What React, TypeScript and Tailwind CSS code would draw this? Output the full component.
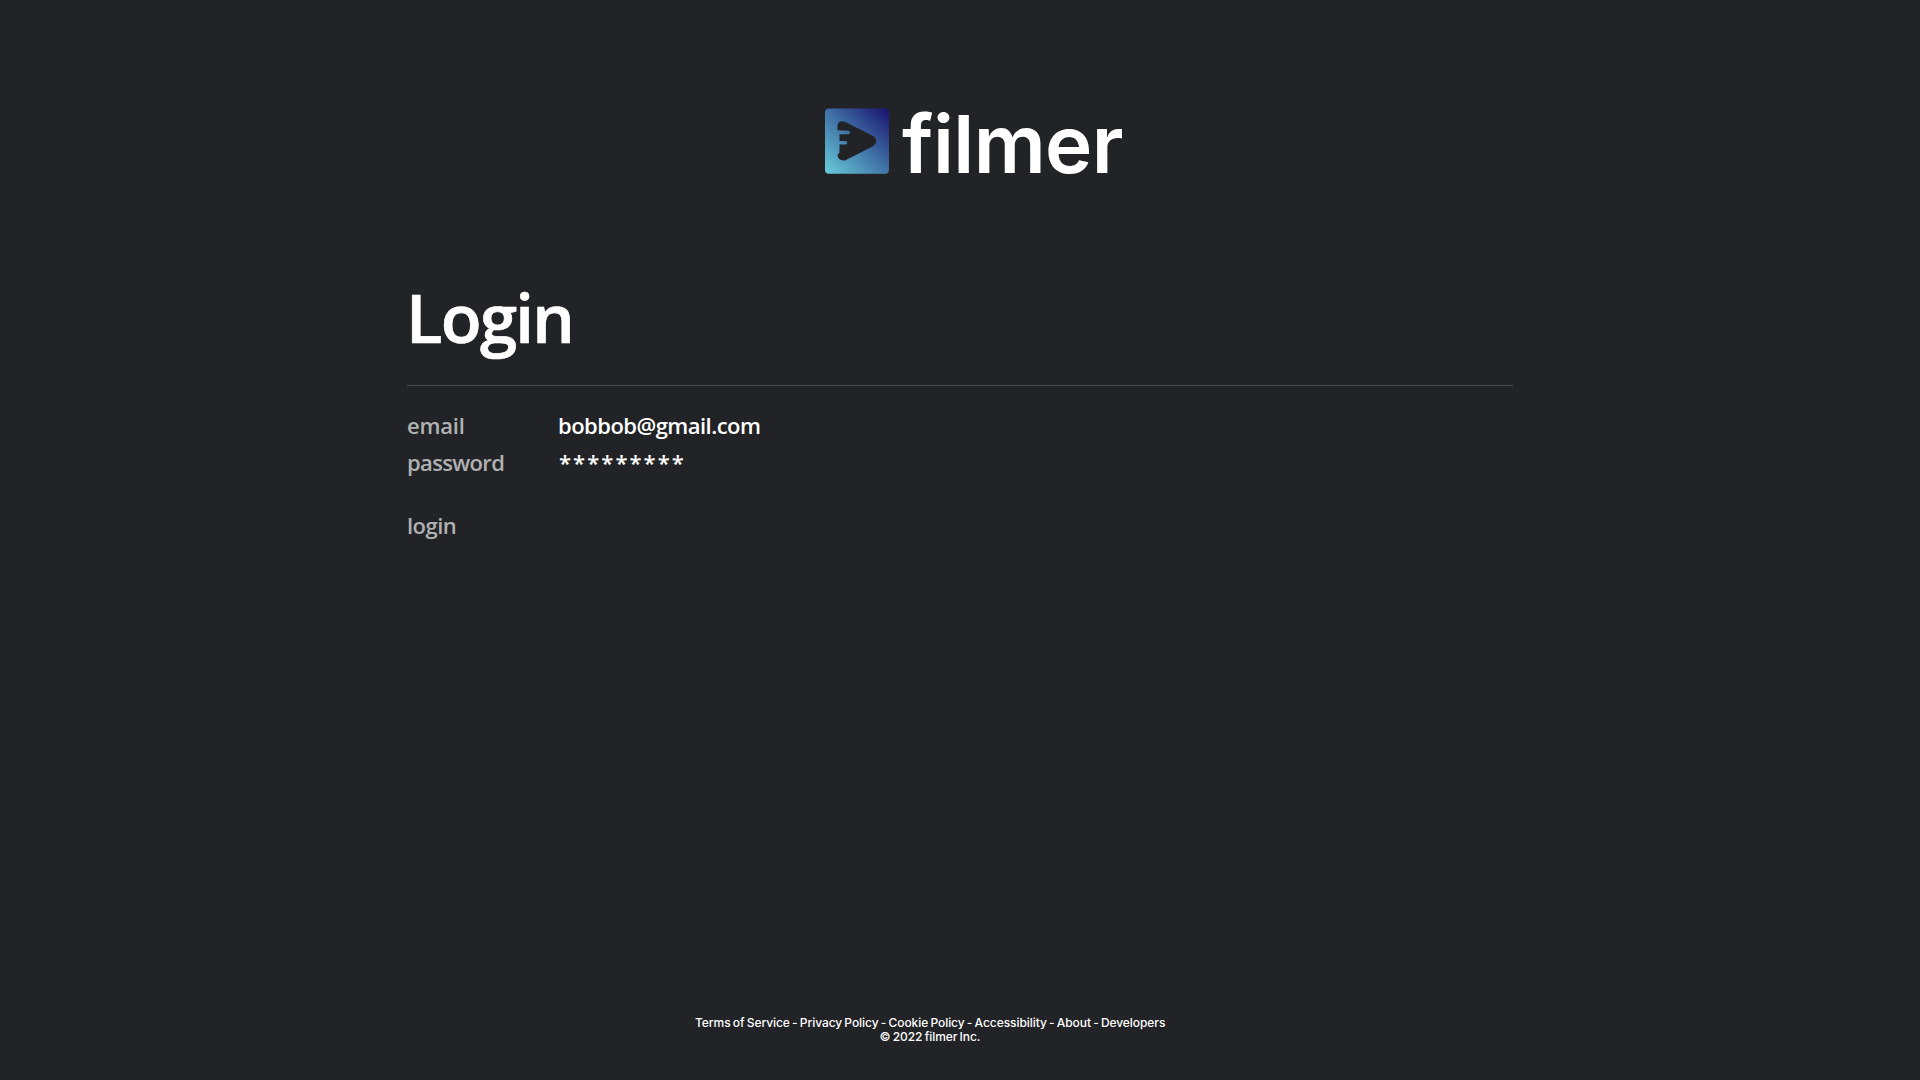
const links = ['Terms of Service', 'Privacy Policy', 'Cookie Policy', 'Accessibility', 'About', 'Developers'];

function Logo() {
  return (
    <svg className="block h-[66px] w-[65px] shrink-0" viewBox="0 0 65 66">
      <defs>
        <linearGradient id="tile" x1="0" y1="66" x2="64" y2="0" gradientUnits="userSpaceOnUse">
          <stop offset="0" stopColor="#68cddb" />
          <stop offset="0.5" stopColor="#4173a7" />
          <stop offset="1" stopColor="#17106e" />
        </linearGradient>
      </defs>
      <rect y="0.5" width="64" height="65.3" rx="4" fill="url(#tile)" />
      <path
        fill="#222326"
        d="M12.5 22.2V18C12.5 13.8 16.5 12 20.5 14L47.5 27.8C52.5 30.4 52.5 35.8 47.5 38.4L21.5 51.7C18.5 53.4 15 52.6 13.3 49.8C12.2 47.8 12.5 45.9 14.5 44.5V36.5H20.5A1.7 1.7 0 0 0 20.5 33H14.5V26.3H23.2A1.7 1.7 0 0 0 23.2 22.7Z"
      />
    </svg>
  );
}

export default function App() {
  return (
    <div className="flex h-[1080px] w-[1920px] flex-col overflow-hidden bg-[#222326] font-['Open_Sans',sans-serif] text-white">
      <header className="ml-[825px] mt-[108px] flex h-[80px] items-start">
        <Logo />
        <h1 className="ml-[12px] mt-[-4px] whitespace-nowrap font-['Inter',sans-serif] text-[80px] font-semibold leading-[80px] tracking-[-0.6px]">
          filmer
        </h1>
      </header>

      <main className="ml-[407px] w-[1106px] grow font-semibold">
        <h2 className="mt-[87px] h-[111px] whitespace-nowrap border-b border-[#4b4c4f] text-[67px] leading-[84px] tracking-[-1.7px] [-webkit-text-stroke:0.7px_white]">
          <span className="-ml-px">Login</span>
        </h2>
        <dl className="mt-[21px] grid grid-cols-[151px_1fr] auto-rows-[37px] text-[22px] leading-[37px] tracking-[-0.53px]">
          <dt className="tracking-[-0.2px] text-[#b0b1b2]">email</dt>
          <dd>bobbob@gmail.com</dd>
          <dt className="tracking-[-0.65px] text-[#b0b1b2]">password</dt>
          <dd className="pl-px tracking-[2.05px]">*********</dd>
        </dl>
        <button className="mt-[26px] block text-[22px] leading-[37px] tracking-[-0.53px] text-[#b0b1b2]">login</button>
      </main>

      <footer className="mb-[36px] ml-[695px] w-[470px] text-center font-['Inter',sans-serif] text-[12px] font-medium leading-[14px] tracking-[-0.06px] [word-spacing:-0.9px]">
        <nav className="whitespace-nowrap">{links.join(' - ')}</nav>
        <p>© 2022 filmer Inc.</p>
      </footer>
    </div>
  );
}
